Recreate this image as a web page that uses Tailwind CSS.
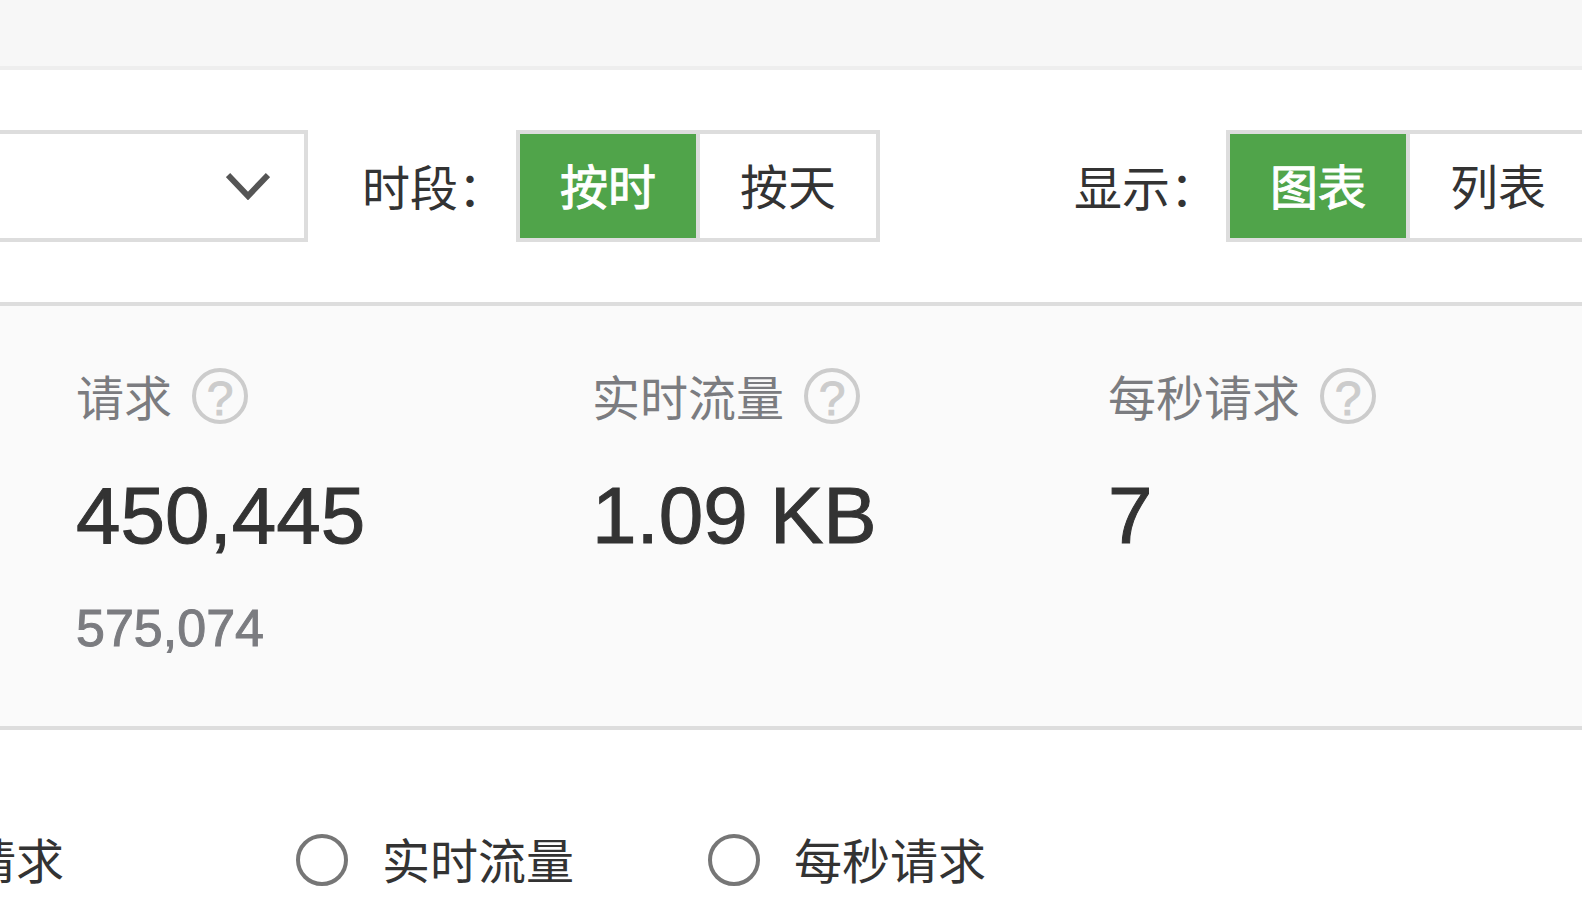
<!DOCTYPE html>
<html lang="zh-CN">
<head>
<meta charset="UTF-8">
<meta name="viewport" content="width=device-width, initial-scale=1">
<title>实时监控</title>
<script src="https://cdn.jsdelivr.net/npm/@tailwindcss/browser@4"></script>
</head>
<body class="bg-white min-h-screen overflow-hidden text-[#333] text-[48px] leading-[56px] font-['Liberation_Sans','Noto_Sans_CJK_SC',sans-serif]">
    <header class="h-[70px] bg-[#f7f7f7] border-b-4 border-[#eee]"></header>

    <!-- 筛选栏 -->
    <form class="flex items-center py-[60px] whitespace-nowrap">
        <div class="relative shrink-0 w-[308px]">
            <select aria-label="域名" class="block appearance-none w-full h-28 bg-white border-4 border-l-0 border-[#ddd]">
                <option></option>
            </select>
            <svg class="absolute right-[38px] top-[42px] w-11 h-7 pointer-events-none" viewBox="0 0 44 28" fill="none" stroke="#555" stroke-width="6">
                <path d="M2 3L22 24L42 3" />
            </svg>
        </div>

        <span id="period" class="shrink-0 ml-[54px] mr-[10px] pt-2">时段：</span>
        <div role="group" aria-labelledby="period" class="flex shrink-0 w-[364px] h-28 border-4 border-[#ddd] divide-x-4 divide-[#ddd]">
            <button type="button" class="flex-1 pt-[6px] bg-[#50a44a] text-white [-webkit-text-stroke:1px]">按时</button>
            <button type="button" class="flex-1 pt-[6px] bg-white">按天</button>
        </div>

        <span id="display" class="shrink-0 ml-[194px] mr-2 pt-2">显示：</span>
        <div role="group" aria-labelledby="display" class="flex shrink-0 w-[364px] h-28 border-4 border-[#ddd] divide-x-4 divide-[#ddd]">
            <button type="button" class="flex-1 pt-[6px] bg-[#50a44a] text-white [-webkit-text-stroke:1px]">图表</button>
            <button type="button" class="flex-1 pt-[6px] bg-white">列表</button>
        </div>
    </form>

    <!-- 数据概览 -->
    <section class="flex h-[428px] pl-[76px] pt-[62px] bg-[#fafafa] border-y-4 border-[#ddd] [-webkit-text-stroke:1px]">
        <div class="shrink-0 w-[516px]">
            <div class="flex items-center h-14 gap-5 text-[#7b7c80]">
                <h3 class="pt-2 [-webkit-text-stroke:0]">请求</h3>
                <button type="button" aria-label="请求说明" class="size-14 pt-[6px] rounded-full border-4 border-[#ccc] text-[#ccc] leading-[42px]">?</button>
            </div>
            <p class="mt-[46px] text-[80px] leading-[92px]">450,445</p>
            <p class="mt-[36px] text-[52px] leading-[60px] text-[#7b7c80]">575,074</p>
        </div>
        <div class="shrink-0 w-[516px]">
            <div class="flex items-center h-14 gap-5 text-[#7b7c80]">
                <h3 class="pt-2 [-webkit-text-stroke:0]">实时流量</h3>
                <button type="button" aria-label="实时流量说明" class="size-14 pt-[6px] rounded-full border-4 border-[#ccc] text-[#ccc] leading-[42px]">?</button>
            </div>
            <p class="mt-[46px] text-[80px] leading-[92px]">1.09 KB</p>
        </div>
        <div class="shrink-0">
            <div class="flex items-center h-14 gap-5 text-[#7b7c80]">
                <h3 class="pt-2 [-webkit-text-stroke:0]">每秒请求</h3>
                <button type="button" aria-label="每秒请求说明" class="size-14 pt-[6px] rounded-full border-4 border-[#ccc] text-[#ccc] leading-[42px]">?</button>
            </div>
            <p class="mt-[46px] text-[80px] leading-[92px]">7</p>
        </div>
    </section>

    <!-- 图表指标 -->
    <form class="flex -ml-[118px] pt-[99px] gap-[34px] whitespace-nowrap">
        <label class="flex items-center shrink-0 w-[380px] gap-[34px]">
            <input type="radio" name="metric" checked class="appearance-none size-[52px] rounded-full border-4 border-[#767676] checked:border-[16px] checked:border-[#50a44a]">
            <span class="pt-[6px]">请求</span>
        </label>
        <label class="flex items-center shrink-0 w-[378px] gap-[34px]">
            <input type="radio" name="metric" class="appearance-none size-[52px] rounded-full border-4 border-[#767676]">
            <span class="pt-[6px]">实时流量</span>
        </label>
        <label class="flex items-center shrink-0 gap-[34px]">
            <input type="radio" name="metric" class="appearance-none size-[52px] rounded-full border-4 border-[#767676]">
            <span class="pt-[6px]">每秒请求</span>
        </label>
    </form>
</body>
</html>
